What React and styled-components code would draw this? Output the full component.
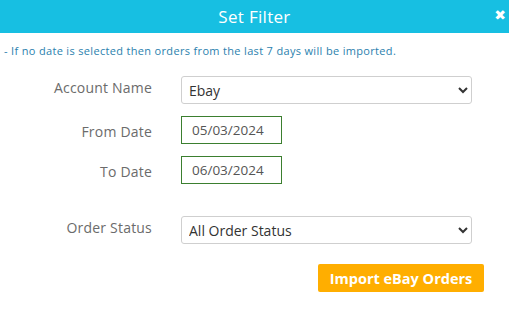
import React from 'react'
import styled, { createGlobalStyle } from 'styled-components'

const GlobalStyle = createGlobalStyle`
  body {
    margin: 0;
    background: #fff;
    font-family: "Open Sans", "Liberation Sans", sans-serif;
  }
`

const App = () => (
  <>
    <GlobalStyle />
    <Dialog>
      <Header>
        <Title>Set Filter</Title>
        <Close>✖</Close>
      </Header>
      <Note>- If no date is selected then orders from the last 7 days will be imported.</Note>
      <Form>
        <Row>
          <Label htmlFor="account">Account Name</Label>
          <Select id="account" defaultValue="ebay">
            <option value="ebay">Ebay</option>
          </Select>
        </Row>
        <Row>
          <Label htmlFor="from" low>From Date</Label>
          <DateInput id="from" type="text" defaultValue="05/03/2024" />
        </Row>
        <Row>
          <Label htmlFor="to" low>To Date</Label>
          <DateInput id="to" type="text" defaultValue="06/03/2024" />
        </Row>
        <Row spaced>
          <Label htmlFor="status">Order Status</Label>
          <Select id="status" defaultValue="all">
            <option value="all">All Order Status</option>
          </Select>
        </Row>
        <Actions>
          <ImportButton type="button">Import eBay Orders</ImportButton>
        </Actions>
      </Form>
    </Dialog>
  </>
)

const Dialog = styled.div`
  width: 509px;
  height: 327px;
  background: #fff;
`

const Header = styled.div`
  position: relative;
  height: 33px;
  background: #17bfe2;
  display: flex;
  align-items: center;
  justify-content: center;
`

const Title = styled.h2`
  margin: 0;
  color: #fff;
  font-size: 17px;
  font-weight: 400;
  letter-spacing: 0.3px;
`

const Close = styled.span`
  position: absolute;
  right: 3px;
  top: 7px;
  color: #fff;
  font-size: 14px;
  font-family: "DejaVu Sans", sans-serif;
`

const Note = styled.p`
  margin: 0;
  padding: 10px 4px 0;
  height: 24px;
  font-size: 11px;
  letter-spacing: 0.33px;
  color: #2b7fae;
`

const Form = styled.div`
  display: flex;
  flex-direction: column;
  gap: 12px;
  padding-top: 9px;
`

const Row = styled.div`
  display: grid;
  grid-template-columns: 152px 290px;
  column-gap: 29px;
  align-items: start;
  margin-top: ${p => (p.spaced ? '20px' : '0')};
`

const Label = styled.label`
  text-align: right;
  padding-top: ${p => (p.low ? '6px' : '2px')};
  font-size: 14px;
  letter-spacing: 0.2px;
  color: #6b6b6b;
`

const Select = styled.select`
  height: 28px;
  width: 291px;
  padding: 0 3px;
  border: 1px solid #cfcfcf;
  border-radius: 3px;
  background: #fff;
  font-family: inherit;
  font-size: 14px;
  color: #333;
`

const DateInput = styled.input`
  box-sizing: border-box;
  height: 28px;
  width: 101px;
  padding: 0 10px;
  border: 1px solid #3b7f2f;
  border-radius: 0;
  font-family: inherit;
  font-size: 13.5px;
  color: #555;
  outline: none;
`

const Actions = styled.div`
  display: flex;
  justify-content: flex-end;
  padding-right: 25px;
  margin-top: 8px;
`

const ImportButton = styled.button`
  height: 28px;
  width: 166px;
  border: 0;
  border-radius: 2px;
  background: #ffae00;
  color: #fff;
  font-family: inherit;
  font-size: 14.5px;
  font-weight: 700;
`

export default App
